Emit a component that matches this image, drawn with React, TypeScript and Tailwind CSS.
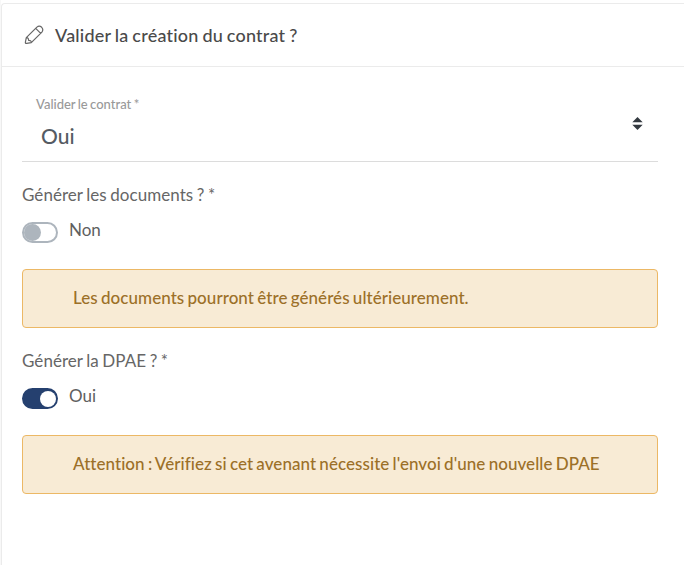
import React, { useState } from 'react';

interface ToggleFieldProps {
  label: string;
  defaultOn: boolean;
  notice: string;
}

const ToggleField: React.FC<ToggleFieldProps> = ({ label, defaultOn, notice }) => {
  const [on, setOn] = useState(defaultOn);

  return (
    <div className="h-[166px]">
      <div className="text-[17px] leading-6 tracking-[0.05px] text-[#666]">{label}</div>
      <div className="mt-[11px] flex h-6 items-center">
        <button
          role="switch"
          aria-checked={on}
          onClick={() => setOn(!on)}
          className={`mt-[5px] flex h-[21px] w-9 items-center rounded-full border-2 ${
            on ? 'justify-end border-[#25406f] bg-[#25406f]' : 'justify-start border-[#adb5bd] bg-white'
          }`}
        >
          <span className={`rounded-full ${on ? 'size-4 bg-white' : 'size-[17px] bg-[#adb5bd]'}`} />
        </button>
        <span className="ml-[11px] text-[17px] leading-6 text-[#606060]">{on ? 'Oui' : 'Non'}</span>
      </div>
      <div className="mt-[27px] flex h-[59px] items-center rounded-[4px] border border-[#ecb865] bg-[#f8ebd5] pb-[2px] pl-[50px] text-[17px] font-medium tracking-[0.05px] text-[#9c7028] [word-spacing:-1.1px]">
        {notice}
      </div>
    </div>
  );
};

const App: React.FC = () => {
  return (
    <div className="h-[565px] overflow-hidden bg-[#f8f8f8] pl-px font-['Lato',sans-serif] [word-spacing:-0.9px]">
      <div className="bg-white pt-[3px]">
        <div className="h-[562px] rounded-tl-[4px] border-t border-l border-[#ebebeb] bg-white">
          <header className="flex h-[63px] items-center border-b border-[#ebebeb] pl-[22px]">
            <svg viewBox="0 0 20 20" className="size-5 fill-none stroke-[#666]" strokeWidth="1.2" strokeLinejoin="round">
              <path d="M2.7 18.4Q1.2 18.7 1.4 17.2L2.3 12.7 12.9 2.1Q15.3.2 17.7 2.3 19.8 4.7 17.9 7.1L7.3 17.7ZM11.7 3.3l5 5M2.3 12.7q2-.4 2.4 2.6 2.7 0 2.6 2.4" />
            </svg>
            <h1 className="ml-[11px] text-[18px] font-medium tracking-[0.21px] text-[#4a4a4a]">
              Valider la création du contrat ?
            </h1>
          </header>

          <main className="px-5 pt-[22px] pr-[26px]">
            <div className="flex h-[73px] items-center justify-between border-b border-[#dcdcdc] pr-[15px] pb-[3px]">
              <div className="pl-[14px]">
                <div className="text-[13px] leading-[14px] font-medium text-[#999]">Valider le contrat *</div>
                <div className="mt-[11px] pl-[5px] text-[21px] leading-7 font-medium text-[#555b63]">Oui</div>
              </div>
              <svg viewBox="0 0 4 5" className="h-[13px] w-[11px] fill-[#343a40]">
                <path d="M2 0 0 2h4zm0 5L0 3h4z" />
              </svg>
            </div>

            <div className="pt-[21px]">
              <ToggleField
                label="Générer les documents ? *"
                defaultOn={false}
                notice="Les documents pourront être générés ultérieurement."
              />
              <ToggleField
                label="Générer la DPAE ? *"
                defaultOn
                notice="Attention : Vérifiez si cet avenant nécessite l'envoi d'une nouvelle DPAE"
              />
            </div>
          </main>
        </div>
      </div>
    </div>
  );
};

export default App;
